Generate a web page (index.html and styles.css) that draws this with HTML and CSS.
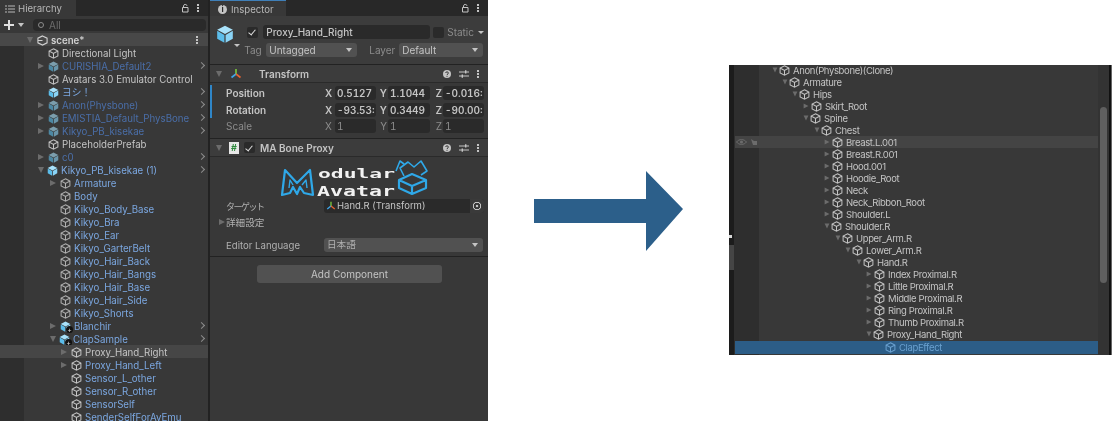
FILE: index.html
```html
<!DOCTYPE html>
<html lang="en">
<head>
    <meta charset="UTF-8">
    <meta name="viewport" content="width=device-width, initial-scale=1.0">
    <title>Modular Avatar - Bone Proxy</title>
    <link rel="stylesheet" href="styles.css">
</head>
<body>

    <!-- icons used all over the page -->
    <svg class="defs" aria-hidden="true">
        <symbol id="cube" viewBox="0 0 12 12">
            <path d="M6 .8 10.8 3.3V8.7L6 11.2 1.2 8.7V3.3ZM1.2 3.3 6 6l4.8-2.7M6 6v5.2" fill="none" stroke="currentColor" stroke-width="1.1"/>
        </symbol>
        <symbol id="prefab" viewBox="0 0 12 12">
            <path d="M6 .5 11.2 3.2 6 6 .8 3.2Z" fill="#a8e2fb"/>
            <path d="M.8 3.9 5.6 6.6V11.8L.8 9.1Z" fill="#5cbdea"/>
            <path d="M11.2 3.9 6.4 6.6V11.8L11.2 9.1Z" fill="#8ad4f6"/>
        </symbol>
        <symbol id="lock" viewBox="0 0 10 10">
            <path d="M2.5 4.5H8V9H2.5ZM3.5 4.5V2.8C3.5 1 7 1 7 2.8" fill="none" stroke="#c4c4c4" stroke-width="1"/>
        </symbol>
        <symbol id="kebab" viewBox="0 0 4 10">
            <path d="M1 1h2v2H1zM1 4h2v2H1zM1 7h2v2H1z" fill="#c4c4c4"/>
        </symbol>
        <symbol id="help" viewBox="0 0 10 10">
            <circle cx="5" cy="5" r="4" fill="#c4c4c4"/>
            <path d="M3.6 4C3.7 2.4 6.4 2.5 6.4 4 6.4 5 5 5 5 6M5 6.8V7.8" fill="none" stroke="#383838" stroke-width="1"/>
        </symbol>
        <symbol id="sliders" viewBox="0 0 10 10">
            <path d="M0 3H10M0 7H10" stroke="#c4c4c4" stroke-width="1"/>
            <path d="M6 1.2h1.4v3.4H6zM2.6 5.4H4v3.4H2.6z" fill="#c4c4c4"/>
        </symbol>
        <symbol id="axes" viewBox="0 0 12 12">
            <path d="M6 6V1" stroke="#7ccb3c" stroke-width="1.6"/>
            <path d="M6 6 1.5 9.5" stroke="#3ea6e8" stroke-width="1.6"/>
            <path d="M6 6 10.5 9.5" stroke="#e8632f" stroke-width="1.6"/>
        </symbol>
    </svg>

    <div class="page">
        <div class="editor">

            <section class="hierarchy">
                <div class="tabbar">
                    <div class="tab tab-h">
                        <svg class="tab-list" viewBox="0 0 10 8"><path d="M0 1h2M3 1h7M0 4h2M3 4h7M0 7h2M3 7h7" stroke="#b8b8b8"/></svg>
                        Hierarchy
                    </div>
                    <svg class="ico-lock"><use href="#lock"/></svg>
                    <svg class="ico-kebab"><use href="#kebab"/></svg>
                </div>
                <div class="h-tools">
                    <span class="plus"></span><span class="caret"></span>
                    <div class="search"><span class="search-ico"></span>All</div>
                </div>
                <div class="tree">
                    <div class="row scene"><span class="arrow open"></span><svg class="scene-ico" viewBox="0 0 12 12"><path d="M6 1 11 3.5V8.500L6 11 1 8.500V3.500ZM1 6H6" fill="none" stroke="#d0d0d0" stroke-width="1.200"/></svg><b>scene*</b><svg class="ico-kebab row-menu"><use href="#kebab"/></svg></div>
                    <div class="row d1"><span class="arrow none"></span><svg class="ico"><use href="#cube"/></svg>Directional Light</div>
                    <div class="row d1 off"><span class="arrow"></span><svg class="ico dim"><use href="#prefab"/></svg>CURISHIA_Default2<i class="more"></i></div>
                    <div class="row d1"><span class="arrow none"></span><svg class="ico"><use href="#cube"/></svg>Avatars 3.0 Emulator Control</div>
                    <div class="row d1 blue"><span class="arrow none"></span><svg class="ico"><use href="#prefab"/></svg>ヨシ！<i class="more"></i></div>
                    <div class="row d1 off"><span class="arrow"></span><svg class="ico dim"><use href="#prefab"/></svg>Anon(Physbone)<i class="more"></i></div>
                    <div class="row d1 off"><span class="arrow"></span><svg class="ico dim"><use href="#prefab"/></svg>EMISTIA_Default_PhysBone<i class="more"></i></div>
                    <div class="row d1 off"><span class="arrow"></span><svg class="ico dim"><use href="#prefab"/></svg>Kikyo_PB_kisekae<i class="more"></i></div>
                    <div class="row d1"><span class="arrow none"></span><svg class="ico"><use href="#cube"/></svg>PlaceholderPrefab</div>
                    <div class="row d1 off"><span class="arrow"></span><svg class="ico dim"><use href="#prefab"/></svg>c0<i class="more"></i></div>
                    <div class="row d1 blue"><span class="arrow open"></span><svg class="ico"><use href="#prefab"/></svg>Kikyo_PB_kisekae (1)<i class="more"></i></div>
                    <div class="row d2 blue"><span class="arrow"></span><svg class="ico grey"><use href="#cube"/></svg>Armature</div>
                    <div class="row d2 blue"><span class="arrow none"></span><svg class="ico grey"><use href="#cube"/></svg>Body</div>
                    <div class="row d2 blue"><span class="arrow none"></span><svg class="ico grey"><use href="#cube"/></svg>Kikyo_Body_Base</div>
                    <div class="row d2 blue"><span class="arrow none"></span><svg class="ico grey"><use href="#cube"/></svg>Kikyo_Bra</div>
                    <div class="row d2 blue"><span class="arrow none"></span><svg class="ico grey"><use href="#cube"/></svg>Kikyo_Ear</div>
                    <div class="row d2 blue"><span class="arrow none"></span><svg class="ico grey"><use href="#cube"/></svg>Kikyo_GarterBelt</div>
                    <div class="row d2 blue"><span class="arrow none"></span><svg class="ico grey"><use href="#cube"/></svg>Kikyo_Hair_Back</div>
                    <div class="row d2 blue"><span class="arrow none"></span><svg class="ico grey"><use href="#cube"/></svg>Kikyo_Hair_Bangs</div>
                    <div class="row d2 blue"><span class="arrow none"></span><svg class="ico grey"><use href="#cube"/></svg>Kikyo_Hair_Base</div>
                    <div class="row d2 blue"><span class="arrow none"></span><svg class="ico grey"><use href="#cube"/></svg>Kikyo_Hair_Side</div>
                    <div class="row d2 blue"><span class="arrow none"></span><svg class="ico grey"><use href="#cube"/></svg>Kikyo_Shorts</div>
                    <div class="row d2 blue"><span class="arrow"></span><span class="ico-wrap"><svg class="ico"><use href="#prefab"/></svg><i class="badge">+</i></span>Blanchir<i class="more"></i></div>
                    <div class="row d2 blue"><span class="arrow open"></span><span class="ico-wrap"><svg class="ico"><use href="#prefab"/></svg><i class="badge">+</i></span>ClapSample<i class="more"></i></div>
                    <div class="row d3 hover"><span class="arrow"></span><svg class="ico"><use href="#cube"/></svg>Proxy_Hand_Right</div>
                    <div class="row d3 blue"><span class="arrow"></span><svg class="ico"><use href="#cube"/></svg>Proxy_Hand_Left</div>
                    <div class="row d3 blue"><span class="arrow none"></span><svg class="ico"><use href="#cube"/></svg>Sensor_L_other</div>
                    <div class="row d3 blue"><span class="arrow none"></span><svg class="ico"><use href="#cube"/></svg>Sensor_R_other</div>
                    <div class="row d3 blue"><span class="arrow none"></span><svg class="ico"><use href="#cube"/></svg>SensorSelf</div>
                    <div class="row d3 blue"><span class="arrow none"></span><svg class="ico"><use href="#cube"/></svg>SenderSelfForAvEmu</div>
                </div>
            </section>

            <section class="inspector">
                <div class="tabbar">
                    <div class="tab tab-i"><span class="info">i</span>Inspector</div>
                    <svg class="ico-lock"><use href="#lock"/></svg>
                    <svg class="ico-kebab"><use href="#kebab"/></svg>
                </div>

                <div class="go-head">
                    <div class="go-icon"><svg><use href="#prefab"/></svg><span class="caret small"></span></div>
                    <div class="go-fields">
                        <div class="go-line">
                            <span class="check on"></span>
                            <div class="field name">Proxy_Hand_Right</div>
                            <span class="check"></span>
                            <span class="static">Static</span><span class="caret small"></span>
                        </div>
                        <div class="go-line second">
                            <span class="lab-tag">Tag</span>
                            <div class="select tag">Untagged</div>
                            <span class="lab-layer">Layer</span>
                            <div class="select layer">Default</div>
                        </div>
                    </div>
                </div>

                <div class="comp-head">
                    <span class="arrow open"></span>
                    <svg class="comp-ico"><use href="#axes"/></svg>
                    <b class="comp-title">Transform</b>
                    <svg class="act"><use href="#help"/></svg><svg class="act"><use href="#sliders"/></svg><svg class="ico-kebab"><use href="#kebab"/></svg>
                </div>
                <div class="transform">
                    <div class="t-row changed"><b>Position</b><i>X</i><span>0.5127</span><i>Y</i><span>1.1044</span><i>Z</i><span>-0.016:</span></div>
                    <div class="t-row changed"><b>Rotation</b><i>X</i><span>-93.53:</span><i>Y</i><span>0.3449</span><i>Z</i><span>-90.00:</span></div>
                    <div class="t-row plain"><b>Scale</b><i>X</i><span>1</span><i>Y</i><span>1</span><i>Z</i><span>1</span></div>
                </div>

                <div class="comp-head second">
                    <span class="arrow open"></span>
                    <span class="script-ico">#</span>
                    <span class="check on"></span>
                    <b class="comp-title">MA Bone Proxy</b>
                    <svg class="act"><use href="#help"/></svg><svg class="act"><use href="#sliders"/></svg><svg class="ico-kebab"><use href="#kebab"/></svg>
                </div>
                <div class="proxy">
                    <svg class="logo" viewBox="0 0 150 42">
                        <g fill="none" stroke="#2fa8e8" stroke-width="2.200" stroke-linejoin="round">
                            <path d="M2 38 5 13 17 26 30 13 33 38 24 36 20 30 17 37 13 30 10 36Z"/>
                            <path d="M9 31 10 23 13 28M27 31 26 23 22 28" stroke-width="1.400"/>
                            <path d="M119 23 132 17 146 23V31L132 37 119 31ZM119 23 132 29 146 23M132 29V37"/>
                            <path d="M124 19 120 11 128 5 134 10 141 4 147 14 141 18M116 14 120 4 124 7" stroke-width="1.600"/>
                        </g>
                        <text class="logo-txt small-line" x="38" y="21" textLength="77" lengthAdjust="spacingAndGlyphs">odular</text>
                        <text class="logo-txt" x="37" y="39" textLength="78" lengthAdjust="spacingAndGlyphs">Avatar</text>
                    </svg>
                    <div class="prop">
                        <span class="prop-label kana">ターゲット</span>
                        <div class="field target">
                            <svg class="tiny"><use href="#axes"/></svg>Hand.R (Transform)
                            <span class="pick"></span>
                        </div>
                    </div>
                    <div class="prop fold"><span class="arrow"></span>詳細設定</div>
                    <div class="prop lang">
                        <span class="prop-label">Editor Language</span>
                        <div class="select lang-sel">日本語</div>
                    </div>
                </div>
                <div class="add-wrap"><div class="add-btn">Add Component</div></div>
            </section>
        </div>

        <div class="arrow-wrap">
            <svg class="big-arrow" viewBox="0 0 149 80"><path d="M0 28H112V0L149 38 112 80V52H0Z" fill="#2c5f8a"/></svg>
        </div>

        <section class="scene-view">
            <div class="sv-edge"><span class="sv-tick"></span></div>
            <div class="sv-tree">
                <div class="sv-row s4"><span class="arrow open"></span><svg class="ico"><use href="#cube"/></svg>Anon(Physbone)(Clone)</div>
                <div class="sv-row s5"><span class="arrow open"></span><svg class="ico"><use href="#cube"/></svg>Armature</div>
                <div class="sv-row s6"><span class="arrow open"></span><svg class="ico"><use href="#cube"/></svg>Hips</div>
                <div class="sv-row s7"><span class="arrow"></span><svg class="ico"><use href="#cube"/></svg>Skirt_Root</div>
                <div class="sv-row s7"><span class="arrow open"></span><svg class="ico"><use href="#cube"/></svg>Spine</div>
                <div class="sv-row s8"><span class="arrow open"></span><svg class="ico"><use href="#cube"/></svg>Chest</div>
                <div class="sv-row s9 hover">
                    <svg class="eye" viewBox="0 0 22 8"><path d="M.5 4C3 .8 8 .8 10.500 4 8 7.200 3 7.200 .5 4Z" fill="none" stroke="#6c6c6c"/><circle cx="5.500" cy="4" r="1.600" fill="#6c6c6c"/><path d="M15 1 18 3H21V7H17Z" fill="#6c6c6c"/></svg>
                    <span class="arrow"></span><svg class="ico"><use href="#cube"/></svg>Breast.L.001
                </div>
                <div class="sv-row s9"><span class="arrow"></span><svg class="ico"><use href="#cube"/></svg>Breast.R.001</div>
                <div class="sv-row s9"><span class="arrow"></span><svg class="ico"><use href="#cube"/></svg>Hood.001</div>
                <div class="sv-row s9"><span class="arrow"></span><svg class="ico"><use href="#cube"/></svg>Hoodie_Root</div>
                <div class="sv-row s9"><span class="arrow"></span><svg class="ico"><use href="#cube"/></svg>Neck</div>
                <div class="sv-row s9"><span class="arrow"></span><svg class="ico"><use href="#cube"/></svg>Neck_Ribbon_Root</div>
                <div class="sv-row s9"><span class="arrow"></span><svg class="ico"><use href="#cube"/></svg>Shoulder.L</div>
                <div class="sv-row s9"><span class="arrow open"></span><svg class="ico"><use href="#cube"/></svg>Shoulder.R</div>
                <div class="sv-row s10"><span class="arrow open"></span><svg class="ico"><use href="#cube"/></svg>Upper_Arm.R</div>
                <div class="sv-row s11"><span class="arrow open"></span><svg class="ico"><use href="#cube"/></svg>Lower_Arm.R</div>
                <div class="sv-row s12"><span class="arrow open"></span><svg class="ico"><use href="#cube"/></svg>Hand.R</div>
                <div class="sv-row s13"><span class="arrow"></span><svg class="ico"><use href="#cube"/></svg>Index Proximal.R</div>
                <div class="sv-row s13"><span class="arrow"></span><svg class="ico"><use href="#cube"/></svg>Little Proximal.R</div>
                <div class="sv-row s13"><span class="arrow"></span><svg class="ico"><use href="#cube"/></svg>Middle Proximal.R</div>
                <div class="sv-row s13"><span class="arrow"></span><svg class="ico"><use href="#cube"/></svg>Ring Proximal.R</div>
                <div class="sv-row s13"><span class="arrow"></span><svg class="ico"><use href="#cube"/></svg>Thumb Proximal.R</div>
                <div class="sv-row s13"><span class="arrow open"></span><svg class="ico"><use href="#cube"/></svg>Proxy_Hand_Right</div>
                <div class="sv-row s14 selected"><span class="arrow none"></span><svg class="ico"><use href="#cube"/></svg>ClapEffect</div>
            </div>
            <div class="sv-scroll"><div class="sv-thumb"></div></div>
            <div class="sv-end"></div>
        </section>
    </div>

</body>
</html>
```

FILE: styles.css
```css
* {
    box-sizing: border-box;
}

body {
    margin: 0;
    background: #fff;
    font-family: Inter, "Noto Sans CJK JP", "Liberation Sans", sans-serif;
    font-size: 10px;
    color: #c4c4c4;
    overflow: hidden;
}

.defs {
    position: absolute;
    width: 0;
    height: 0;
}

.page {
    display: flex;
    width: 1112px;
    height: 421px;
}

/* both shots are soft scaled screenshots */
.editor,
.scene-view {
    filter: blur(.35px);
}

.editor {
    display: flex;
    flex: none;
    width: 488px;
    height: 421px;
    background: #222;
}

/* shared bits */
.tabbar {
    display: flex;
    align-items: center;
    height: 16px;
    background: #282828;
    padding-right: 8px;
}

.tab {
    display: flex;
    align-items: center;
    height: 16px;
    padding-top: 1px;
    background: #383838;
    margin-right: auto;
    color: #b8b8b8;
    font-size: 9.600px;
}

.tab-h {
    width: 76px;
    padding-left: 5px;
    gap: 3px;
}

.tab-list {
    width: 10px;
    height: 8px;
}

.tab-i {
    width: 76px;
    padding-left: 8px;
    border-top: 1px solid #3f7fb8;
}

.info {
    width: 9px;
    height: 9px;
    margin-right: 4px;
    border-radius: 50%;
    background: #c4c4c4;
    color: #282828;
    font-size: 8px;
    font-weight: 700;
    line-height: 9px;
    text-align: center;
}

.ico-lock {
    width: 10px;
    height: 10px;
    margin-right: 6px;
}

.ico-kebab {
    width: 4px;
    height: 10px;
}

.arrow {
    flex: none;
    width: 0;
    height: 0;
    margin-right: 4px;
    border-left: 6px solid #6c6c6c;
    border-top: 3.500px solid transparent;
    border-bottom: 3.500px solid transparent;
}

.arrow.open {
    border-top: 6px solid #6c6c6c;
    border-left: 3.500px solid transparent;
    border-right: 3.500px solid transparent;
    border-bottom: 0;
    margin-right: 3px;
}

.arrow.none {
    border: 0;
    width: 6px;
}

.caret {
    width: 0;
    height: 0;
    border-top: 4px solid #c4c4c4;
    border-left: 3.500px solid transparent;
    border-right: 3.500px solid transparent;
}

.caret.small {
    border-top-width: 3px;
    border-left-width: 3px;
    border-right-width: 3px;
}

.ico {
    flex: none;
    width: 11px;
    height: 11px;
    margin-right: 3px;
    color: #c4c4c4;
}

/* hierarchy */
.hierarchy {
    flex: none;
    width: 208px;
    background: #383838;
    overflow: hidden;
}

.h-tools {
    display: flex;
    align-items: center;
    height: 17px;
    padding: 0 2px 0 4px;
}

.plus {
    flex: none;
    width: 10px;
    height: 10px;
    background:
        linear-gradient(#e0e0e0, #e0e0e0) center / 10px 2px no-repeat,
        linear-gradient(#e0e0e0, #e0e0e0) center / 2px 10px no-repeat;
}

.h-tools .caret {
    margin: 0 9px 0 4px;
}

.search {
    display: flex;
    align-items: center;
    flex: 1;
    height: 12px;
    padding-left: 5px;
    border-radius: 4px;
    background: #2a2a2a;
    color: #6c6c6c;
}

.search-ico {
    width: 6px;
    height: 6px;
    margin-right: 5px;
    border: 1px solid #8c8c8c;
    border-radius: 50%;
}

.tree {
    background: linear-gradient(90deg, #2e2e2e 24px, #383838 24px);
    font-size: 9.700px;
}

.row {
    position: relative;
    display: flex;
    align-items: center;
    height: 13px;
    padding-top: 1px;
    white-space: nowrap;
}

.row b {
    font-weight: 600;
    color: #d0d0d0;
}

.scene {
    background: #484848;
    padding-left: 27px;
}

.scene .arrow {
    margin-right: 4px;
}

.scene-ico {
    width: 11px;
    height: 11px;
    margin-right: 3px;
}

.row-menu {
    position: absolute;
    right: 9px;
    top: 2px;
}

.d1 {
    padding-left: 38px;
}

.d2 {
    padding-left: 50px;
}

.d3 {
    padding-left: 61px;
}

.d1 .arrow,
.d2 .arrow,
.d3 .arrow {
    margin-right: 4px;
}

.d1 .arrow.open,
.d2 .arrow.open {
    margin-right: 3px;
}

.blue {
    color: #7ba7e0;
}

.off {
    color: #4a6ea8;
}

.dim {
    opacity: .6;
}

.grey {
    color: #b0b0b0;
}

.hover {
    background: #464646;
}

.more {
    position: absolute;
    right: 4px;
    top: 4px;
    width: 5px;
    height: 5px;
    border-top: 1px solid #8c8c8c;
    border-right: 1px solid #8c8c8c;
    transform: rotate(45deg);
}

.ico-wrap {
    position: relative;
    flex: none;
    display: flex;
}

.badge {
    position: absolute;
    right: 1px;
    bottom: -1px;
    width: 7px;
    height: 7px;
    border-radius: 50%;
    background: #111;
    color: #ddd;
    font-size: 7px;
    font-style: normal;
    line-height: 7px;
    text-align: center;
}

/* inspector */
.inspector {
    flex: none;
    width: 278px;
    margin-left: 2px;
    background: #383838;
    overflow: hidden;
}

.go-head {
    display: flex;
    height: 49px;
    padding: 9px 4px 0 6px;
    background: #3c3c3c;
    border-bottom: 1px solid #222;
}

.go-icon {
    position: relative;
    width: 26px;
}

.go-icon svg {
    width: 18px;
    height: 18px;
}

.go-icon .caret {
    position: absolute;
    left: 18px;
    top: 19px;
}

.go-fields {
    flex: 1;
    margin-left: 0;
}

.go-line {
    display: flex;
    align-items: center;
    height: 14px;
    padding-left: 6px;
}

.go-line.second {
    margin-top: 4px;
    padding-left: 0;
}

.check {
    flex: none;
    width: 11px;
    height: 11px;
    border-radius: 2px;
    background: #2a2a2a;
    position: relative;
}

.check.on::after {
    content: "";
    position: absolute;
    left: 3px;
    top: 1.500px;
    width: 3px;
    height: 6px;
    border-right: 1.500px solid #ddd;
    border-bottom: 1.500px solid #ddd;
    transform: rotate(40deg);
}

.field {
    height: 14px;
    padding-left: 3px;
    border-radius: 3px;
    background: #2a2a2a;
    line-height: 14px;
}

.name {
    width: 167px;
    margin: 0 3px 0 5px;
    font-weight: 500;
}

.static {
    margin: 0 4px 0 3px;
    color: #8c8c8c;
}

.lab-tag {
    width: 22px;
    margin-left: 3px;
    color: #8c8c8c;
}

.lab-layer {
    width: 30px;
    margin-left: 12px;
    color: #8c8c8c;
}

.select {
    position: relative;
    height: 14px;
    padding-left: 3px;
    border-radius: 3px;
    background: #515151;
    line-height: 14px;
}

.select::after {
    content: "";
    position: absolute;
    right: 5px;
    top: 5px;
    border-top: 4px solid #c4c4c4;
    border-left: 3.500px solid transparent;
    border-right: 3.500px solid transparent;
}

.tag {
    width: 91px;
}

.layer {
    width: 84px;
}

.comp-head {
    display: flex;
    align-items: center;
    height: 18px;
    padding: 0 8px 0 6px;
    background: #3c3c3c;
    border-bottom: 1px solid #2a2a2a;
}

.comp-head .arrow {
    margin-right: 8px;
}

.comp-ico {
    width: 12px;
    height: 12px;
    margin-right: 17px;
}

.comp-title {
    margin-right: auto;
    font-weight: 600;
    color: #c4c4c4;
}

.act {
    width: 10px;
    height: 10px;
    margin-right: 7px;
}

.comp-head.second {
    border-top: 1px solid #222;
    height: 19px;
}

.comp-head.second .arrow {
    margin-right: 7px;
}

.script-ico {
    width: 10px;
    height: 12px;
    margin-right: 5px;
    background: #e8e8e8;
    color: #2d8a3c;
    font-size: 9px;
    font-weight: 700;
    line-height: 12px;
    text-align: center;
}

.comp-head.second .check {
    margin-right: 5px;
}

.transform {
    height: 55px;
    padding-top: 2px;
}

.t-row {
    display: grid;
    grid-template-columns: 99px 10px 41px 12px 42px 13px 41px;
    align-items: center;
    height: 16.500px;
    padding-left: 16px;
}

.t-row.changed {
    border-left: 2px solid #2f86c8;
    padding-left: 14px;
}

.t-row b {
    font-weight: 600;
}

.t-row i {
    padding-right: 1px;
    font-style: normal;
    font-weight: 600;
    text-align: right;
}

.t-row i:nth-child(2) {
    text-align: left;
}

.t-row span {
    height: 14px;
    padding-left: 2px;
    border-radius: 3px;
    background: #2a2a2a;
    font-weight: 600;
    font-variant-numeric: tabular-nums;
    line-height: 14px;
    overflow: hidden;
}

.t-row.plain,
.t-row.plain b,
.t-row.plain i,
.t-row.plain span {
    color: #8c8c8c;
    font-weight: 400;
}

.proxy {
    height: 100px;
    padding-left: 16px;
    border-bottom: 1px solid #222;
}

.logo {
    display: block;
    width: 150px;
    height: 42px;
    margin-left: 54px;
}

.logo-txt {
    fill: #f2f2f2;
    font-family: "DejaVu Sans Mono", monospace;
    font-size: 13.500px;
    font-weight: 700;
}

.logo-txt.small-line {
    font-size: 12px;
}

.prop {
    display: flex;
    align-items: center;
    height: 14px;
    color: #b0b0b0;
    font-size: 9.600px;
}

.prop-label {
    width: 98px;
}

.kana {
    font-size: 9px;
    letter-spacing: -1.500px;
}

.target {
    position: relative;
    display: flex;
    align-items: center;
    width: 160px;
    padding-left: 2px;
    color: #c4c4c4;
    font-size: 9.500px;
}

.tiny {
    width: 10px;
    height: 10px;
    margin-right: 1px;
}

.pick {
    position: absolute;
    right: 0;
    top: 0;
    width: 14px;
    height: 14px;
    border-radius: 0 3px 3px 0;
    background:
        radial-gradient(circle, #c4c4c4 1.300px, transparent 1.600px),
        radial-gradient(circle, transparent 3.200px, #c4c4c4 3.400px, #c4c4c4 4.100px, transparent 4.400px),
        #3a3a3a;
}

.fold {
    margin: 2px 0 0 -7px;
}

.fold .arrow {
    margin-right: 1px;
}

.lang {
    margin-top: 9px;
}

.lang-sel {
    width: 159px;
}

.add-wrap {
    padding: 8px 0 0 47px;
}

.add-btn {
    width: 185px;
    height: 18px;
    border-radius: 3px;
    background: #515151;
    line-height: 18px;
    text-align: center;
}

/* arrow between the two shots */
.arrow-wrap {
    flex: none;
    width: 241px;
    padding: 171px 0 0 46px;
}

.big-arrow {
    display: block;
    width: 149px;
    height: 80px;
}

/* second screenshot */
.scene-view {
    position: relative;
    display: flex;
    flex: none;
    width: 383px;
    height: 290px;
    margin-top: 65px;
    background: linear-gradient(90deg, #2e2e2e 30px, #383838 30px);
}

.sv-edge {
    position: relative;
    flex: none;
    width: 5px;
    background: linear-gradient(#1c1c1c 180px, #454545 180px, #454545 205px, #1c1c1c 205px);
}

.sv-tick {
    position: absolute;
    left: 0;
    top: 170px;
    width: 3px;
    height: 3px;
    background: #d8d8d8;
}

.sv-tree {
    flex: 1;
    margin-top: -1px;
    padding: 0 0 0 1px;
    font-size: 9.500px;
    letter-spacing: -.36px;
    overflow: hidden;
}

.sv-row {
    position: relative;
    display: flex;
    align-items: center;
    height: 12px;
    color: #c4c4c4;
    white-space: nowrap;
}

.sv-row .arrow {
    margin-right: 2px;
    transform: scale(.8);
}

.sv-row .arrow.open {
    margin-right: 1px;
}

.sv-row .ico {
    width: 11px;
    height: 11px;
    margin-right: 3px;
}

.s4 { padding-left: 37px; }
.s5 { padding-left: 47px; }
.s6 { padding-left: 57px; }
.s7 { padding-left: 68px; }
.s8 { padding-left: 79px; }
.s9 { padding-left: 89px; }
.s10 { padding-left: 100px; }
.s11 { padding-left: 110px; }
.s12 { padding-left: 121px; }
.s13 { padding-left: 131px; }
.s14 { padding-left: 142px; }

.sv-row.hover {
    background: #444;
}

.eye {
    position: absolute;
    left: 1px;
    top: 2px;
    width: 22px;
    height: 8px;
}

.sv-row.selected {
    height: 13px;
    margin-top: 1px;
    background: #2c5d87;
    color: #6aa0cf;
}

.sv-row.selected .ico {
    color: #6aa0cf;
}

.sv-scroll {
    flex: none;
    width: 13px;
    background: #333;
    border-right: 2px solid #111;
}

.sv-thumb {
    width: 7px;
    height: 176px;
    margin: 42px 0 0 2px;
    border-radius: 4px;
    background: #5f5f5f;
}

.sv-end {
    flex: none;
    width: 1px;
    background: #666;
}
```
